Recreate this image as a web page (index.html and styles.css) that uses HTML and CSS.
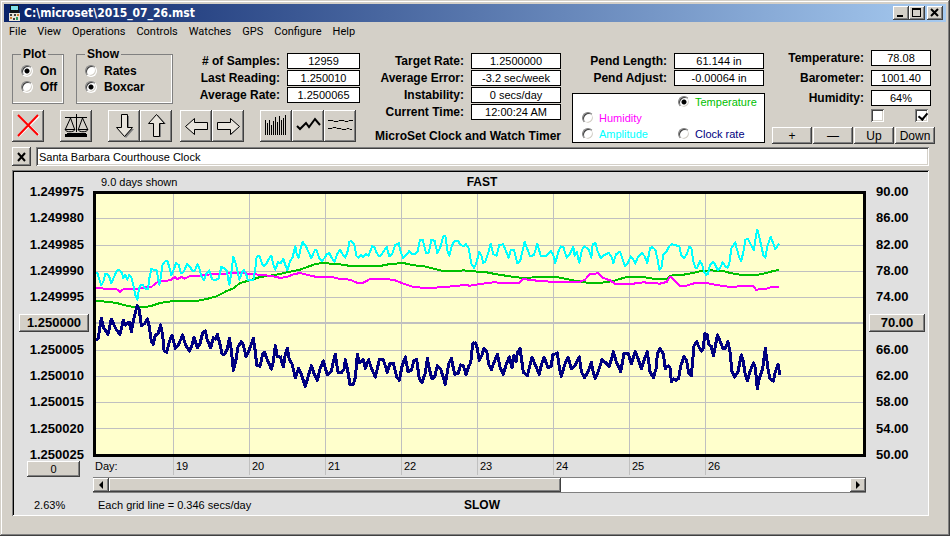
FILE: index.html
```html
<!DOCTYPE html>
<html lang="en">
<head>
<meta charset="utf-8">
<title>C:\microset\2015_07_26.mst</title>
<link rel="stylesheet" href="styles.css">
</head>
<body>
<div class="window">
  <header class="titlebar">
    <svg class="app-icon" width="11" height="16" viewBox="0 0 11 16" shape-rendering="crispEdges" aria-hidden="true">
      <path fill="#101418" d="M1 0h9v8H1z"/><path fill="#7fe0e8" d="M2 1h7v4H2z"/>
      <path fill="#e8e4d8" d="M0 8h11v8H0z"/><path fill="#404040" d="M1 9h2v2H1zM5 9h2v2H5zM4 13h2v2H4z"/>
      <path fill="#d08030" d="M8 9h2v2H8zM1 12h2v2H1z"/><path fill="#2a9a60" d="M7 12h2v3H7z"/>
    </svg>
    <h1>C:\microset\2015_07_26.mst</h1>
    <button class="btn cap" aria-label="Minimize"><svg width="12" height="10" viewBox="0 0 12 10"><path d="M2 7h6v2H2z"/></svg></button>
    <button class="btn cap" aria-label="Maximize"><svg width="12" height="10" viewBox="0 0 12 10"><path fill-rule="evenodd" d="M1 0h9v9H1zM2 2v6h7V2z"/></svg></button>
    <button class="btn cap close" aria-label="Close"><svg width="12" height="10" viewBox="0 0 12 10"><path fill="none" stroke="#000" stroke-width="2" d="M2 1l7 7M9 1l-7 7"/></svg></button>
  </header>
  <nav class="menu">
    <a href="#">File</a><a href="#">View</a><a href="#">Operations</a><a href="#">Controls</a><a href="#">Watches</a><a href="#">GPS</a><a href="#">Configure</a><a href="#">Help</a>
  </nav>

  <main>
    <section class="controls">
      <div class="col-left">
        <div class="left-top">
          <fieldset class="group plot-group">
            <legend>Plot</legend>
            <label><input type="radio" name="plot" checked>On</label>
            <label><input type="radio" name="plot">Off</label>
          </fieldset>
          <fieldset class="group show-group">
            <legend>Show</legend>
            <label><input type="radio" name="show">Rates</label>
            <label><input type="radio" name="show" checked>Boxcar</label>
          </fieldset>
          <dl class="readouts samples">
            <dt># of Samples:</dt><dd>12959</dd>
            <dt>Last Reading:</dt><dd>1.250010</dd>
            <dt>Average Rate:</dt><dd>1.2500065</dd>
          </dl>
        </div>
        <div class="toolbar">
          <button class="btn tool" aria-label="Stop"><svg width="28" height="28" viewBox="0 0 28 28"><path fill="none" stroke="#fff" stroke-width="2" d="M5 4l20 19M25 4L5 24"/><path fill="none" stroke="#f00" stroke-width="2" d="M4 3l20 20M24 3L4 24"/></svg></button>
          <button class="btn tool" aria-label="Balance"><svg width="28" height="28" viewBox="0 0 28 28"><g fill="none" stroke="#000"><path d="M3 5.500h22M14.500 2v18M8.500 6L3.500 17M8.500 6l4 11M20.500 6l-4 11M20.500 6l5 11"/><path d="M3 17.500h10c-1 3-9 3-10 0zM16 17.500h10c-1 3-9 3-10 0z"/></g><path d="M5 21h19v1H5zM3 22h22v3H3z"/></svg></button>
          <button class="btn tool" aria-label="Move down"><svg width="28" height="28" viewBox="0 0 28 28"><path class="shade" d="M12 4h7v13h5l-8 9-8-9h4z"/><path class="arrow" d="M11.500 2.500h6v13h5l-8 9-8-9h5z"/></svg></button>
          <button class="btn tool next" aria-label="Move up"><svg width="28" height="28" viewBox="0 0 28 28"><path class="shade" d="M12 25h7V12h5l-8-9-8 9h4z"/><path class="arrow" d="M11.500 24.500h6v-13h5l-8-9-8 9h5z"/></svg></button>
          <button class="btn tool near" aria-label="Move left"><svg width="28" height="28" viewBox="0 0 28 28"><path class="shade" d="M26 11v7H13v5l-8-8 8-8v4z"/><path class="arrow" d="M25.500 10.500v7h-13v5l-9-8 9-8v4z"/></svg></button>
          <button class="btn tool next" aria-label="Move right"><svg width="28" height="28" viewBox="0 0 28 28"><path class="shade" d="M4 11v7h13v5l8-8-8-8v4z"/><path class="arrow" d="M3.500 10.500v7h13v5l9-8-9-8v4z"/></svg></button>
          <button class="btn tool" aria-label="Bar plot"><svg width="28" height="28" viewBox="0 0 28 28"><path fill="none" stroke="#000" d="M3.500 23V8M5.500 23V11M7.500 23V8M9.500 23V13M11.500 23V9M13.500 23V5M15.500 23V10M17.500 23V4M19.500 23V8M21.500 23V6M23.500 23V3"/></svg></button>
          <button class="btn tool next" aria-label="Line plot"><svg width="28" height="28" viewBox="0 0 28 28"><path fill="none" stroke="#000" stroke-width="2" d="M3 14l3 3 6-6 3 4 6-8 5 6"/></svg></button>
          <button class="btn tool next" aria-label="Noise plot"><svg width="28" height="28" viewBox="0 0 28 28"><path fill="none" stroke="#000" d="M2 8.500h5l1 1h4l1-1h5l1 1h3l1-1h4M2 16.500h4l1-1h3l1 1h4l1 1h4l1-1h2l1 1h2"/></svg></button>
        </div>
      </div>

      <div class="col-mid">
        <dl class="readouts wide">
          <dt>Target Rate:</dt><dd>1.2500000</dd>
          <dt>Average Error:</dt><dd>-3.2 sec/week</dd>
          <dt>Instability:</dt><dd>0 secs/day</dd>
          <dt>Current Time:</dt><dd>12:00:24 AM</dd>
        </dl>
        <p class="product">MicroSet Clock and Watch Timer</p>
      </div>

      <div class="col-pend">
        <dl class="readouts wide">
          <dt>Pend Length:</dt><dd>61.144 in</dd>
          <dt>Pend Adjust:</dt><dd>-0.00064 in</dd>
        </dl>
        <div class="series-box" role="radiogroup" aria-label="Right scale">
          <label class="temperature"><input type="radio" name="scale" checked>Temperature</label>
          <label class="humidity"><input type="radio" name="scale">Humidity</label>
          <label class="amplitude"><input type="radio" name="scale">Amplitude</label>
          <label class="clock"><input type="radio" name="scale">Clock rate</label>
        </div>
      </div>

      <div class="col-env">
        <dl class="readouts env">
          <dt>Temperature:</dt><dd>78.08</dd>
          <dt>Barometer:</dt><dd>1001.40</dd>
          <dt>Humidity:</dt><dd>64%</dd>
        </dl>
        <div class="checks">
          <input type="checkbox" aria-label="Barometer plot">
          <input type="checkbox" aria-label="Environment plot" checked>
        </div>
        <div class="steps">
          <button class="btn">+</button><button class="btn">—</button><button class="btn">Up</button><button class="btn">Down</button>
        </div>
      </div>
    </section>

    <div class="note">
      <button class="btn clear" aria-label="Clear title"><svg width="10" height="10" viewBox="0 0 10 10"><path fill="none" stroke="#000" stroke-width="2" d="M1 1l7 8M8 1L1 9"/></svg></button>
      <input type="text" aria-label="Plot title" value="Santa Barbara Courthouse Clock">
    </div>

    <section class="panel">
      <div class="axis axis-left">
        <div class="ticks">
          <span>1.249975</span><span>1.249980</span><span>1.249985</span><span>1.249990</span><span>1.249995</span>
          <button class="btn">1.250000</button>
          <span>1.250005</span><span>1.250010</span><span>1.250015</span><span>1.250020</span><span>1.250025</span>
        </div>
        <button class="btn zero">0</button>
        <span class="percent">2.63%</span>
      </div>

      <div class="center">
        <div class="caption"><span>9.0 days shown</span><strong>FAST</strong></div>
        <div class="plot">
          <svg viewBox="18 27 2301 780" preserveAspectRatio="none" role="img" aria-label="Clock rate, temperature, humidity and amplitude by day">
            <g class="grid">
              <path d="M18 100H2319M18 181H2319M18 259H2319M18 337H2319M18 496H2319M18 574H2319M18 652H2319M18 730H2319"/>
              <path d="M250 27V807M478 27V807M706 27V807M934 27V807M1162 27V807M1390 27V807M1618 27V807M1846 27V807"/>
              <path class="zero-line" d="M18 414H2319"/>
            </g>
            <g class="temp-line">
              <polyline points="14,348 50,350 80,354 110,362 140,368 180,364 210,354 250,348 320,348 350,342 380,334 410,318 430,310 450,294 480,286 510,276 540,272 570,267"/>
              <polyline transform="translate(570 0)" points="0,267 30,260 60,254 90,243 110,236 135,234 160,237 190,239 210,243 300,243 330,237 370,234 400,241 430,243 460,251 490,258 530,259 550,256 570,258"/>
              <polyline transform="translate(1140 0)" points="0,258 50,262 80,268 120,274 160,279 210,276 260,276 290,282 320,288 350,293 390,294 410,291 430,288 470,276 520,276 550,281 590,282"/>
              <polyline transform="translate(1590 0)" points="140,282 150,272 200,268 240,259 270,256 310,258 330,264 360,269 415,269 440,264 460,258 478,255"/>
            </g>
            <g class="hum-line">
              <polyline points="14,307 32,310 80,313 90,320 100,313 140,311 185,305 200,293 215,288 240,286 255,276 262,282 275,276 284,281 300,273 330,272 370,267 450,264 490,267 520,271 540,272 560,276 570,279"/>
              <polyline transform="translate(570 0)" points="0,279 20,276 40,268 60,264 80,269 110,276 155,276 180,282 210,284 230,293 250,293 270,282 320,282 345,286 370,296 400,306 440,309 480,307 530,303 550,300 570,302"/>
              <polyline transform="translate(1140 0)" points="0,302 30,297 70,292 90,293 148,293 158,282 190,286 240,290 330,290 345,284 360,267 385,265 400,279 420,286 435,296 490,296 520,292 570,296 590,291 600,275"/>
              <polyline transform="translate(1590 0)" points="150,275 160,282 180,302 200,302 225,294 260,294 290,300 330,306 370,303 400,303 408,314 440,311 455,306 478,306"/>
            </g>
            <g class="amp-line">
              <polyline points="14,264 22,264 28,284 34,300 40,290 46,266 52,266 58,276 64,294 72,276 80,258 88,254 96,264 100,280 106,270 112,284 118,270 124,276 130,300 136,330 142,344 146,318 150,302 158,300 168,312 174,312 178,280 184,252 200,256 208,300 212,280 218,238 224,230 232,228 238,246 244,270 252,252 258,234 266,240 272,264 280,262 292,236 300,246 308,258 314,258 322,238 328,250 334,274 342,286 350,264 358,256 366,282 376,286 386,280 394,246 402,250 410,256 418,300 424,262 430,216 438,238 448,284 456,262 462,256 468,266 474,286 490,286 496,250 500,216 508,212 516,236 522,244 530,236 536,222 544,212 550,238 556,254 564,232 572,234"/>
              <polyline transform="translate(570 0)" points="2,234 10,222 16,240 22,256 30,230 38,216 46,184 50,206 56,218 62,190 68,170 78,184 86,202 94,220 104,196 110,196 118,220 126,228 134,218 140,208 148,204 156,220 164,230 172,206 180,194 188,208 196,218 204,196 208,170 214,168 222,176 230,214 236,218 242,210 250,216 258,208 266,212 276,184 284,188 290,204 298,214 306,206 320,186 328,214 336,208 346,180 356,174 362,200 370,220 378,210 388,198 396,206 404,208 412,202 420,164 428,164 438,204 446,204 454,164 464,168 472,204 480,190 490,154 496,152 502,196 508,212 516,180 524,168 534,168 542,180 552,184 558,178 566,190 574,236"/>
              <polyline transform="translate(1140 0)" points="4,236 12,248 18,238 28,200 34,212 40,234 46,230 56,200 62,176 70,208 80,212 88,180 100,178 110,204 116,218 122,196 132,194 136,210 142,234 150,230 158,196 164,170 172,192 180,214 192,210 202,176 212,212 230,212 242,198 250,210 256,234 264,204 272,184 280,186 290,218 300,206 310,186 314,212 320,200 328,234 336,194 344,184 356,194 364,218 368,178 376,174 382,196 392,220 400,212 416,204 424,214 430,234 438,208 450,200 458,224 466,244 474,234 482,214 488,220 496,236 504,216 516,204 524,214 532,234 540,190 546,186 556,194 562,220 568,254 574,250 580,208 590,198 600,180"/>
              <polyline transform="translate(1590 0)" points="150,180 156,178 164,180 178,184 184,212 192,220 200,208 208,186 214,188 220,230 226,248 232,248 240,228 246,238 252,260 258,270 264,266 270,240 280,230 288,244 294,256 300,250 308,232 316,244 322,248 328,236 334,190 346,172 350,190 358,218 364,228 370,200 376,164 384,162 394,182 402,196 408,150 412,134 418,156 424,184 430,210 436,218 442,184 452,156 460,176 466,192 478,176"/>
            </g>
            <g class="rate-line">
              <polyline points="14,464 24,462 34,400 40,426 46,436 54,448 64,402 72,420 80,436 90,448 100,406 106,420 112,414 118,412 124,440 130,408 136,382 142,362 148,376 154,422 164,416 172,402 178,426 184,468 190,478 196,450 204,446 212,420 218,450 222,496 230,502 238,470 246,450 256,490 266,478 278,450 286,478 298,498 306,480 312,458 322,488 330,476 338,444 346,438 352,466 362,488 370,458 376,462 382,448 390,478 396,506 402,510 412,492 418,460 424,494 430,556 438,524 444,486 454,470 460,480 468,514 478,494 490,460 496,500 500,540 510,544 518,508 524,502 530,520 544,552 550,530 556,482 562,516 570,512"/>
              <polyline transform="translate(570 0)" points="0,512 10,546 16,508 22,490 28,524 36,536 46,578 56,550 64,568 76,604 84,576 94,542 102,566 112,586 120,552 130,528 142,570 154,558 160,530 166,508 174,562 184,564 192,552 196,524 204,562 210,598 220,598 226,578 232,508 238,534 250,524 256,550 266,524 274,550 286,576 298,524 310,524 322,562 330,534 340,534 350,576 358,586 366,544 376,516 384,560 394,556 402,526 410,524 418,582 426,592 436,564 442,520 450,560 456,582 464,576 472,542 482,552 496,598 506,536 514,520 524,568 534,566 542,540 550,542 558,568 566,544 572,534 578,478 584,470"/>
              <polyline transform="translate(1140 0)" points="14,470 20,482 28,526 36,510 42,490 50,498 56,538 64,554 72,532 82,508 90,546 100,568 108,540 118,516 126,548 132,510 138,530 142,504 150,490 156,532 160,562 172,572 180,540 186,516 196,540 208,568 214,540 222,516 234,548 244,544 248,510 262,504 268,548 274,574 284,540 294,516 304,552 316,540 328,516 334,560 344,578 354,560 364,532 370,562 376,580 386,556 396,524 406,532 418,544 424,524 430,500 438,528 452,560 462,506 474,504 484,536 496,500 504,520 514,552 524,520 532,500 540,560 550,578 558,552 562,508 570,490 580,506 586,552 592,540"/>
              <polyline transform="translate(1590 0)" points="142,540 150,548 154,590 160,582 168,586 176,580 182,544 192,514 200,528 206,564 214,572 218,528 222,482 230,470 236,484 244,498 250,490 254,446 262,450 266,478 274,484 280,512 286,484 292,450 300,468 310,492 316,490 324,470 330,500 336,560 344,576 354,560 364,510 370,528 374,560 382,588 390,560 400,534 406,548 412,612 418,580 428,550 436,490 444,552 450,582 460,588 466,560 474,538 480,570"/>
            </g>
          </svg>
        </div>
        <div class="days"><span>Day:</span><span>19</span><span>20</span><span>21</span><span>22</span><span>23</span><span>24</span><span>25</span><span>26</span></div>
        <div class="scrollbar">
          <button class="btn" aria-label="Scroll left"><svg width="5" height="8" viewBox="0 0 5 8"><path d="M4 0v8L0 4z"/></svg></button>
          <div class="track"><div class="thumb"></div></div>
          <button class="btn" aria-label="Scroll right"><svg width="5" height="8" viewBox="0 0 5 8"><path d="M0 0v8l4-4z"/></svg></button>
        </div>
        <div class="caption foot"><span>Each grid line = 0.346 secs/day</span><strong>SLOW</strong></div>
      </div>

      <div class="axis axis-right">
        <div class="ticks">
          <span>90.00</span><span>86.00</span><span>82.00</span><span>78.00</span><span>74.00</span>
          <button class="btn">70.00</button>
          <span>66.00</span><span>62.00</span><span>58.00</span><span>54.00</span><span>50.00</span>
        </div>
      </div>
    </section>
  </main>
</div>
</body>
</html>
```
FILE: styles.css
```css
* { box-sizing: border-box; }

:root {
  --face: #d4d0c8;
  --dark: #404040;
  --mid: #808080;
  --sans: "Liberation Sans", sans-serif;
}

body {
  margin: 0;
  background: var(--face);
  color: #000;
  font: 11px/16px var(--sans);
}

.window {
  min-height: 100vh;
  padding: 4px;
  box-shadow: inset -1px -1px var(--dark), inset 1px 1px var(--face), inset -2px -2px var(--mid), inset 2px 2px #fff;
}

.btn {
  display: flex;
  align-items: center;
  justify-content: center;
  margin: 0;
  padding: 0;
  border: 0;
  border-radius: 0;
  background: var(--face);
  color: #000;
  font: inherit;
  box-shadow: inset -1px -1px var(--dark), inset 1px 1px #fff, inset -2px -2px var(--mid);
}

/* title bar and menu */
.titlebar {
  display: flex;
  align-items: center;
  height: 18px;
  padding: 0 3px 0 5px;
  background: linear-gradient(90deg, #0a246a, #a6caf0);
}
.titlebar h1 {
  flex: 1;
  margin: 0 0 0 4px;
  color: #fff;
  font: bold 12px/18px "DejaVu Sans Condensed", "DejaVu Sans", sans-serif;
}
.cap { width: 16px; height: 14px; }
.close { margin-left: 2px; }

.menu {
  display: flex;
  gap: 11px;
  height: 20px;
  padding-left: 5px;
  font: 11px/20px Roboto, sans-serif;
}
.menu a { color: #000; text-decoration: none; }

main { padding: 5px 11px 0 8px; }

/* control strip */
.controls { display: flex; height: 98px; }
.col-left { width: 348px; }
.left-top { display: flex; height: 63px; }

.group {
  height: 57px;
  margin: 0;
  padding: 2px 0 0 8px;
  border: 1px solid var(--mid);
  box-shadow: inset -1px -1px #fff;
  font: bold 12px/16px var(--sans);
}
.group legend { height: 14px; padding: 0 2px; line-height: 14px; }
.group label { display: flex; align-items: center; gap: 7px; height: 16px; }
.plot-group { width: 52px; margin-right: 12px; }
.show-group { width: 97px; }

input[type="radio"] {
  appearance: none;
  flex: none;
  width: 12px;
  height: 12px;
  margin: 0;
  border: 1px solid;
  border-color: var(--mid) #fff #fff var(--mid);
  border-radius: 50%;
  background: #fff;
  box-shadow: inset 1px 1px var(--dark), inset -1px -1px var(--face);
}
input[type="radio"]:checked { background: radial-gradient(circle, #000 0 2px, #fff 3px); }

.readouts {
  display: grid;
  grid-template-columns: 1fr 73px;
  grid-auto-rows: 16px;
  gap: 1px 7px;
  margin: 6px 0 0;
}
.readouts dt { font: bold 12px/16px var(--sans); text-align: right; white-space: nowrap; }
.readouts dd {
  margin: 0;
  border: 1px solid #000;
  background: #fff;
  line-height: 14px;
  text-align: center;
}
.samples { flex: 1; }
.wide { grid-template-columns: 1fr 90px; }

.toolbar { display: flex; }
.tool { width: 32px; height: 32px; margin-left: 16px; }
.tool:first-child, .next { margin-left: 0; }
.near { margin-left: 8px; }
.arrow { fill: #e8e4dc; stroke: #000; }
.shade { fill: var(--mid); }

.col-mid { width: 199px; margin: 0 11px 0 auto; }
.product { margin: 8px 0 0; font: bold 12px/16px var(--sans); text-align: right; white-space: nowrap; }

.col-pend { width: 193px; margin-right: 7px; }
.col-pend .readouts { margin-right: 1px; }
.series-box {
  display: grid;
  grid-template-columns: 96px 1fr;
  grid-auto-rows: 16px;
  margin-top: 7px;
  padding-left: 9px;
  border: 1px solid #000;
  background: #fff;
}
.series-box label { display: flex; align-items: center; gap: 5px; white-space: nowrap; }
.temperature { grid-column: 2; color: #00c000; }
.humidity { grid-column: 1; color: #f0f; }
.amplitude { grid-column: 1; color: #0ff; }
.clock { grid-column: 2; color: #000080; }

.col-env { width: 163px; }
.env { grid-template-columns: 1fr 60px; row-gap: 4px; margin: 3px 4px 0 0; }
.checks { display: flex; justify-content: space-between; margin: 3px 7px 5px 99px; }
input[type="checkbox"] {
  appearance: none;
  width: 13px;
  height: 13px;
  margin: 0;
  background: #fff;
  box-shadow: inset 1px 1px var(--mid), inset -1px -1px #fff, inset 2px 2px var(--dark), inset -2px -2px var(--face);
}
input[type="checkbox"]:checked::after {
  content: "";
  display: block;
  width: 4px;
  height: 7px;
  margin: 2px 0 0 5px;
  border: solid #000;
  border-width: 0 2px 2px 0;
  transform: rotate(40deg);
}
.steps { display: grid; grid-template-columns: repeat(4, 1fr); gap: 1px; }
.steps .btn { height: 17px; font-size: 12px; }

/* plot title */
.note { display: flex; gap: 5px; margin: 2px 6px 4px 0; }
.clear { width: 19px; height: 19px; }
.note input {
  flex: 1;
  height: 19px;
  padding: 0 3px;
  border: 0;
  background: #fff;
  font: inherit;
  box-shadow: inset 1px 1px var(--mid), inset -1px -1px #fff, inset 2px 2px var(--dark), inset -2px -2px var(--face);
}

/* chart panel */
.panel {
  display: grid;
  grid-template-columns: 79px 1fr 61px;
  margin-right: 6px;
  padding: 2px 2px 1px;
  background: #e0e0e0;
  box-shadow: inset 1px 1px var(--mid), inset -1px -1px #fff, inset 2px 2px #000;
}
.axis { display: flex; flex-direction: column; padding-top: 11px; font: bold 13px/18px var(--sans); }
.ticks { display: flex; flex-direction: column; justify-content: space-between; height: 281px; }
.ticks .btn { height: 18px; }
.axis-left .ticks span { padding-right: 9px; text-align: right; }
.axis-left .ticks .btn { margin: 0 4px 0 5px; }
.axis-right .ticks span { padding-left: 10px; }
.axis-right .ticks .btn { margin: 0 2px 0 3px; }
.zero { align-self: center; width: 53px; height: 16px; margin-top: -3px; font: 11px/16px var(--sans); }
.percent { margin: 20px 0 0 20px; font: 11px/16px var(--sans); }

.caption {
  display: grid;
  grid-template-columns: 1fr auto 1fr;
  height: 19px;
  padding-left: 5px;
  line-height: 20px;
  white-space: nowrap;
}
.caption strong { font: bold 12px/20px var(--sans); }
.caption span { width: 0; padding-left: 3px; }
.foot { height: 22px; line-height: 24px; }
.foot span { padding-left: 0; }
.foot strong { line-height: 24px; }

.plot { border: 3px solid #000; background: #ffffcc; }
.plot svg { display: block; width: 100%; height: 260px; shape-rendering: crispEdges; }
.plot path, .plot polyline { fill: none; vector-effect: non-scaling-stroke; stroke-linejoin: round; }
.grid { stroke: #c0c0c0; }
.zero-line { stroke-width: 2px; }
.temp-line { stroke: #00c000; stroke-width: 2px; }
.hum-line { stroke: #f0f; stroke-width: 2px; }
.amp-line { stroke: #0ff; stroke-width: 2px; }
.rate-line { stroke: #000080; stroke-width: 3px; }

.days { display: grid; grid-template-columns: 80fr repeat(7, 76fr) 161fr; height: 18px; margin-bottom: 2px; line-height: 18px; }
.days span { padding-left: 2px; }
.days span + span { border-left: 1px solid #c0c0c0; }

.scrollbar { display: flex; height: 16px; border-top: 1px solid var(--mid); border-bottom: 1px solid var(--mid); }
.scrollbar .btn { width: 16px; }
.track { flex: 1; background: #fff; }
.thumb {
  width: 61%;
  height: 100%;
  background: var(--face);
  box-shadow: inset -1px -1px var(--dark), inset 1px 1px #fff, inset -2px -2px var(--mid);
}
```
